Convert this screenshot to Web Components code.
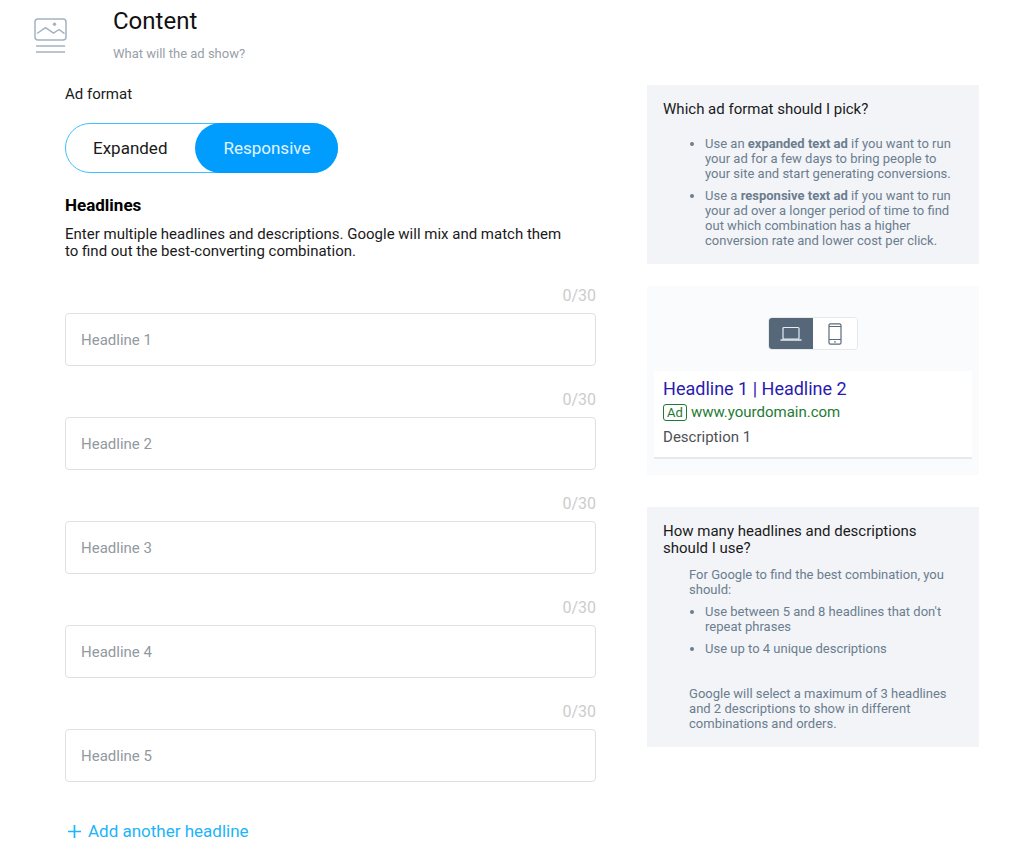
<!DOCTYPE html>
<html lang="en">
<head>
<meta charset="utf-8">
<meta name="viewport" content="width=device-width, initial-scale=1">
<title>Content</title>
<style>
  body {
    margin: 0;
    background: #fff;
    color: #1a1a1a;
    font: 15px/17px Roboto, "Liberation Sans", sans-serif;
  }
</style>
</head>
<body>
<content-step>
  <section-header slot="header">
    Content
    <span slot="hint">What will the ad show?</span>
  </section-header>

  <format-switch label="Ad format" options="Expanded,Responsive" value="Responsive"></format-switch>
  <headline-list heading="Headlines" count="5">
    Enter multiple headlines and descriptions. Google will mix and match them to find out the best-converting combination.
  </headline-list>

  <tip-card slot="aside">
    <span slot="title">Which ad format should I pick?</span>
    <ul class="first">
      <li>Use an <b>expanded text ad</b> if you want to run your ad for a few days to bring people to your site and start generating conversions.</li>
      <li>Use a <b>responsive text ad</b> if you want to run your ad over a longer period of time to find out which combination has a higher conversion rate and lower cost per click.</li>
    </ul>
  </tip-card>
  <ad-preview slot="aside" domain="www.yourdomain.com">
    <span slot="headline">Headline 1 | Headline 2</span>
    <span slot="description">Description 1</span>
  </ad-preview>
  <tip-card slot="aside" class="last">
    <span slot="title">How many headlines and descriptions should I use?</span>
    <p>For Google to find the best combination, you should:</p>
    <ul>
      <li>Use between 5 and 8 headlines that don't repeat phrases</li>
      <li>Use up to 4 unique descriptions</li>
    </ul>
    <p class="note">Google will select a maximum of 3 headlines and 2 descriptions to show in different combinations and orders.</p>
  </tip-card>
</content-step>

<script>
class ContentStep extends HTMLElement {
  constructor() {
    super()
    this.attachShadow({ mode: 'open' })
    this.shadowRoot.innerHTML = `
      <style>
        :host {
          display: block;
        }
        .columns {
          display: grid;
          grid-template-columns: minmax(0, 8fr) minmax(0, 5fr);
          column-gap: 51px;
          align-items: start;
          padding: 0 45px 0 65px;
        }
        aside {
          display: grid;
          gap: 22px;
        }
        ::slotted(.last) {
          margin-top: 10px;
        }
      </style>
      <slot name="header"></slot>
      <div class="columns">
        <main><slot></slot></main>
        <aside><slot name="aside"></slot></aside>
      </div>
    `
  }
}

class SectionHeader extends HTMLElement {
  constructor() {
    super()
    this.attachShadow({ mode: 'open' })
    this.shadowRoot.innerHTML = `
      <style>
        :host {
          display: grid;
          grid-template-columns: 33px 1fr;
          column-gap: 46px;
          padding: 6px 34px 23px;
        }
        svg {
          margin-top: 12px;
        }
        h1 {
          margin: 0 0 10px;
          font-size: 24px;
          line-height: 30px;
          font-weight: 400;
          color: #111;
        }
        p {
          margin: 0;
          font-size: 13px;
          line-height: 16px;
          color: #98a0a8;
        }
      </style>
      <svg width="33" height="36" viewBox="0 0 33 36" fill="none" stroke="#a3b3c2" stroke-width="1.5" aria-hidden="true">
        <rect x="1" y="1" width="31" height="21" rx="3"/>
        <path d="M3 15.500l8.500-5.800 8 5.500 5.500-3.700 5.500 4.200" stroke-linejoin="round"/>
        <circle cx="20.500" cy="6.300" r="1.700" fill="#a3b3c2" stroke="none"/>
        <path d="M2 28h29M2 34h29"/>
      </svg>
      <div>
        <h1><slot></slot></h1>
        <p><slot name="hint"></slot></p>
      </div>
    `
  }
}

class FormatSwitch extends HTMLElement {
  constructor() {
    super()
    this.attachShadow({ mode: 'open' })
    this.shadowRoot.innerHTML = `
      <style>
        :host {
          display: block;
        }
        #label {
          display: block;
          margin-bottom: 20px;
          line-height: 18px;
        }
        .track {
          display: inline-flex;
          gap: 2px;
          box-sizing: border-box;
          height: 50px;
          border: 1px solid #3fbfff;
          border-radius: 25px;
          vertical-align: top;
        }
        button {
          margin: -1px;
          padding: 0 28px;
          border: 0;
          border-radius: 25px;
          background: none;
          color: #1a1a1a;
          font: inherit;
          font-size: 17px;
          cursor: pointer;
        }
        button[aria-pressed="true"] {
          background: #009dff;
          color: #e3f4ff;
        }
      </style>
      <span id="label">${this.getAttribute('label')}</span>
      <div class="track" role="group" aria-labelledby="label"></div>
    `
    const track = this.shadowRoot.querySelector('.track')
    this.getAttribute('options').split(',').forEach(name => {
      const button = document.createElement('button')
      button.type = 'button'
      button.textContent = name
      button.addEventListener('click', () => this.select(name))
      track.append(button)
    })
    this.select(this.getAttribute('value'))
  }
  select(name) {
    this.shadowRoot.querySelectorAll('button').forEach(button => {
      button.setAttribute('aria-pressed', button.textContent === name)
    })
  }
}

class HeadlineField extends HTMLElement {
  constructor() {
    super()
    this.attachShadow({ mode: 'open' })
  }
  connectedCallback() {
    const name = this.getAttribute('name')
    this.shadowRoot.innerHTML = `
      <style>
        :host {
          display: grid;
          gap: 8px;
        }
        output {
          justify-self: end;
          font-size: 16px;
          line-height: 18px;
          color: #ccc;
        }
        input {
          box-sizing: border-box;
          width: 100%;
          height: 53px;
          padding: 0 15px;
          border: 1px solid #e0e0e0;
          border-radius: 4px;
          background: #fff;
          color: #1a1a1a;
          font: inherit;
          font-size: 15px;
        }
        input::placeholder {
          color: #9299a0;
          opacity: 1;
        }
      </style>
      <output for="field">0/30</output>
      <input id="field" type="text" maxlength="30" aria-label="${name}" placeholder="${name}">
    `
    const input = this.shadowRoot.querySelector('input')
    input.addEventListener('input', () => {
      this.shadowRoot.querySelector('output').textContent = `${input.value.length}/30`
    })
  }
}

class HeadlineList extends HTMLElement {
  constructor() {
    super()
    this.attachShadow({ mode: 'open' })
    this.shadowRoot.innerHTML = `
      <style>
        :host {
          display: block;
          margin-top: 23px;
        }
        h2 {
          margin: 0 0 12px;
          font-size: 17px;
          line-height: 18px;
          font-weight: 700;
          color: #000;
        }
        p {
          margin: 0 0 27px;
          padding-right: 20px;
        }
        .fields {
          display: grid;
          gap: 25px;
        }
        button {
          display: flex;
          align-items: center;
          gap: 6px;
          margin: 39px 0 22px;
          padding: 0 2px;
          border: 0;
          background: none;
          color: #1cb4fa;
          font: inherit;
          font-size: 17px;
          line-height: 20px;
          cursor: pointer;
        }
      </style>
      <h2>${this.getAttribute('heading')}</h2>
      <p><slot></slot></p>
      <div class="fields"></div>
      <button type="button">
        <svg width="15" height="15" viewBox="0 0 15 15" stroke="currentColor" stroke-width="1.700" aria-hidden="true">
          <path d="M7.500 1v13M1 7.500h13"/>
        </svg>
        Add another headline
      </button>
    `
    for (let i = 0; i < Number(this.getAttribute('count')); i++) this.add()
    this.shadowRoot.querySelector('button').addEventListener('click', () => this.add())
  }
  add() {
    const fields = this.shadowRoot.querySelector('.fields')
    const field = document.createElement('headline-field')
    field.setAttribute('name', `Headline ${fields.children.length + 1}`)
    fields.append(field)
  }
}

class TipCard extends HTMLElement {
  constructor() {
    super()
    this.attachShadow({ mode: 'open' })
    this.shadowRoot.innerHTML = `
      <style>
        :host {
          display: block;
          padding: 16px;
          background: #f2f4f8;
          color: #6b7d8e;
          font-size: 13px;
          line-height: 15px;
        }
        h3 {
          margin: 0;
          font-size: 15px;
          line-height: 17px;
          font-weight: 400;
          color: #1a1a1a;
        }
        ::slotted(p) {
          margin: 10px 0 0 26px;
        }
        ::slotted(ul) {
          display: grid;
          gap: 7px;
          margin: 7px 0 0;
          padding: 0 0 0 42px;
        }
        ::slotted(.first) {
          margin-top: 18px;
        }
        ::slotted(.note) {
          margin-top: 30px;
        }
      </style>
      <h3><slot name="title"></slot></h3>
      <slot></slot>
    `
  }
}

class AdPreview extends HTMLElement {
  constructor() {
    super()
    this.attachShadow({ mode: 'open' })
    this.shadowRoot.innerHTML = `
      <style>
        :host {
          display: block;
          padding: 31px 7px 16px;
          background: #fafbfd;
        }
        .devices {
          display: flex;
          width: fit-content;
          margin: 0 auto 21px;
          border: 1px solid #e6e8ea;
          border-radius: 4px;
          overflow: hidden;
        }
        button {
          display: grid;
          place-items: center;
          width: 44px;
          height: 31px;
          padding: 0;
          border: 0;
          background: #fff;
          color: #5b6b7d;
          cursor: pointer;
        }
        button[aria-pressed="true"] {
          background: #56677a;
          color: #e8edf2;
        }
        .ad {
          display: grid;
          padding: 8px 9px 10px;
          background: #fff;
          border-bottom: 2px solid #e6eae9;
          line-height: 20px;
        }
        a {
          color: #2a1bb0;
          font-size: 18px;
          text-decoration: none;
        }
        .url {
          display: flex;
          align-items: center;
          gap: 4px;
          margin: 3px 0 5px;
          color: #1e7a34;
          font-size: 15px;
        }
        .badge {
          padding: 0 3px;
          border: 1px solid;
          border-radius: 3px;
          font-size: 13px;
          line-height: 15px;
        }
        .description {
          color: #4d5156;
        }
      </style>
      <div class="devices">
        <button type="button" aria-label="Desktop" aria-pressed="true">
          <svg width="22" height="16" viewBox="0 0 22 16" fill="none" stroke="currentColor" stroke-width="1.200">
            <rect x="3" y="1.500" width="16" height="11.500" rx="1"/>
            <path d="M0.500 14h21" stroke-width="1.600"/>
          </svg>
        </button>
        <button type="button" aria-label="Mobile" aria-pressed="false">
          <svg width="14" height="22" viewBox="0 0 14 22" fill="none" stroke="currentColor" stroke-width="1.200">
            <rect x="1" y="0.800" width="12" height="20.400" rx="1.500"/>
            <path d="M1 3.500h12M1 16.500h12"/>
            <circle cx="7" cy="18.900" r="0.800" fill="currentColor" stroke="none"/>
          </svg>
        </button>
      </div>
      <div class="ad">
        <a href="#"><slot name="headline"></slot></a>
        <div class="url"><span class="badge">Ad</span><span>${this.getAttribute('domain')}</span></div>
        <div class="description"><slot name="description"></slot></div>
      </div>
    `
    const buttons = this.shadowRoot.querySelectorAll('button')
    buttons.forEach(button => button.addEventListener('click', () => {
      buttons.forEach(b => b.setAttribute('aria-pressed', b === button))
    }))
  }
}

customElements.define('content-step', ContentStep)
customElements.define('section-header', SectionHeader)
customElements.define('format-switch', FormatSwitch)
customElements.define('headline-field', HeadlineField)
customElements.define('headline-list', HeadlineList)
customElements.define('tip-card', TipCard)
customElements.define('ad-preview', AdPreview)
</script>
</body>
</html>
